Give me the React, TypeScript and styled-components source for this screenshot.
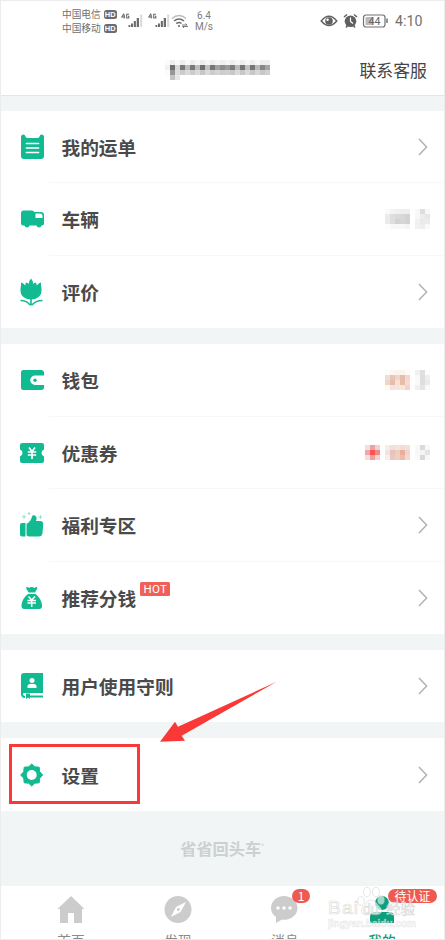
import React from "react";
import styled, { createGlobalStyle } from "styled-components";

const GREEN = "#12ba91";

const GlobalStyle = createGlobalStyle`
  body { margin: 0; background: #fff; }
  * { box-sizing: border-box; }
`;

const Screen = styled.div`
  position: relative;
  width: 445px;
  height: 940px;
  overflow: hidden;
  display: flex;
  flex-direction: column;
  border: 1px solid #ececec;
  background: #f1f5f6;
  color: #444;
  font-family: "Noto Sans CJK SC", sans-serif;
`;

const Header = styled.header`
  height: 95px;
  flex: none;
  background: #fff;
  border-bottom: 1px solid #e4e6e6;
`;

const StatusBar = styled.div`
  height: 40px;
  padding: 0 20px 0 61px;
  display: flex;
  align-items: center;
  color: #707070;
`;

const Carriers = styled.div`
  display: grid;
  row-gap: 0;
  width: 56px;
`;

const Carrier = styled.div`
  display: flex;
  align-items: center;
  gap: 3px;
  height: 14px;
  font-size: 9.7px;
  line-height: 14px;
  white-space: nowrap;
`;

const HdTag = styled.span`
  flex: none;
  width: 13px;
  height: 9px;
  border-radius: 2.5px;
  background: #6c6c6c;
  color: #fff;
  font: 700 7.5px/9px "Liberation Sans", sans-serif;
  text-align: center;
`;

const SignalSvg = styled.svg`
  width: 22px;
  height: 18px;
  margin-left: 3px;
  margin-right: 2px;
`;

const WifiSvg = styled.svg`
  width: 20px;
  height: 18px;
  margin-left: -2px;
`;

const Speed = styled.div`
  width: 24px;
  margin-left: 2px;
  text-align: center;
  font: 10px/11.5px Roboto, sans-serif;
  color: #7c7c7c;
`;

const StatusRight = styled.div`
  margin-left: auto;
  display: flex;
  align-items: center;
`;

const Clock = styled.span`
  margin-left: 6px;
  width: 29px;
  font: 14.2px/20px Roboto, sans-serif;
  white-space: nowrap;
`;

const TitleBar = styled.div`
  height: 54px;
  display: grid;
  grid-template-columns: 1fr auto;
  padding: 0 17px 0 164px;
`;

const TitleMosaic = styled.div`
  padding-top: 19px;
`;

const Support = styled.div`
  padding-top: 16px;
  font-size: 16.9px;
  line-height: 26px;
`;

const Mosaic = styled.div<{ $cols: number }>`
  display: grid;
  grid-template-columns: repeat(${(p) => p.$cols}, 5px);
  grid-auto-rows: 5px;
`;

const Cell = styled.i<{ $c: string }>`
  background: ${(p) => p.$c};
`;

const Group = styled.section<{ $h: number; $top: number }>`
  flex: none;
  height: ${(p) => p.$h}px;
  margin-top: ${(p) => p.$top}px;
  background: #fff;
  display: flex;
  flex-direction: column;
`;

const Row = styled.div`
  flex: 1 1 0;
  display: flex;
  align-items: center;
  padding: 0 14px 0 17px;
  background: linear-gradient(#f8f8f8, #f8f8f8) 48px 100% / 100% 1px no-repeat;
  &:last-child { background: none; }
`;

const IconSvg = styled.svg`
  width: 28px;
  height: 28px;
  flex: none;
`;

const Label = styled.div`
  margin-left: 15.5px;
  font-size: 18.7px;
  line-height: 28px;
  font-weight: 700;
  color: #4a4a4a;
  white-space: nowrap;
`;

const Hot = styled.div`
  width: 30px;
  height: 14px;
  margin: -17px 0 0 4px;
  border-radius: 1.5px;
  background: #ee6058;
  color: #fff;
  font: 11.5px/14px Roboto, sans-serif;
  letter-spacing: 0.3px;
  text-align: center;
`;

const Trail = styled.div`
  margin-left: auto;
  display: flex;
  align-items: center;
  gap: 5px;
`;

const ChevronSvg = styled.svg`
  width: 12px;
  height: 22px;
  margin-right: 1px;
`;

const Brand = styled.div`
  flex: none;
  height: 75px;
  padding-right: 1px;
  text-align: center;
  font-size: 16.2px;
  font-weight: 700;
  line-height: 75px;
  color: #ccd0d1;
  sup { font-size: 5px; line-height: 0; vertical-align: 7px; }
`;

const Nav = styled.nav`
  flex: none;
  height: 53px;
  overflow: hidden;
  background: #fff;
  display: grid;
  grid-template-columns: 124px 90px 124px 70px;
  padding-left: 8px;
`;

const Tab = styled.div<{ $active?: boolean }>`
  position: relative;
  display: flex;
  flex-direction: column;
  align-items: center;
  padding-top: 8px;
  font-size: 13.7px;
  line-height: 20px;
  font-weight: ${(p) => (p.$active ? 500 : 400)};
  color: ${(p) => (p.$active ? "#0b9c78" : "#8a8a8a")};
`;

const TabSvg = styled.svg`
  width: 30px;
  height: 30px;
  flex: none;
  margin-bottom: 6px;
`;

const Badge = styled.span<{ $x: number; $w: number }>`
  position: absolute;
  top: 3px;
  left: ${(p) => p.$x}px;
  width: ${(p) => p.$w}px;
  height: 14px;
  border-radius: 7px;
  background: #ee5a50;
  color: #fff;
  font-size: 12px;
  font-weight: 400;
  line-height: 13px;
  text-align: center;
`;

const Highlight = styled.div`
  position: absolute;
  left: 8px;
  top: 743px;
  width: 131px;
  height: 60px;
  border: 3px solid #fb3838;
`;

const ArrowSvg = styled.svg`
  position: absolute;
  left: 158px;
  top: 679px;
  width: 120px;
  height: 65px;
`;

const Watermark = styled.div`
  position: absolute;
  left: 326px;
  top: 883px;
  width: 96px;
  height: 45px;
`;

const MarkSvg = styled.svg`
  width: 96px;
  height: 45px;
  overflow: visible;
`;

const titleCells = [
  ["#fbfbfb", "#ededed", "#f8f8f8", "#eee", "#f8f8f8", "#ededed", "#f6f6f6", "#ededed", "#f6f6f6", "#eee", "#f6f6f6", "#f0f0f0", "#f6f6f6", "#eee", "#f6f6f6", "#ededed", "#f6f6f6", "#ededed", "#f6f6f6", "#eee", "#eee"],
  ["#f1f1f1", "#6e6e6e", "#d8d8d8", "#787878", "#bdbdbd", "#787878", "#bdbdbd", "#707070", "#c2c2c2", "#767676", "#a2a2a2", "#8c8c8c", "#9c9c9c", "#7c7c7c", "#bbb", "#747474", "#c0c0c0", "#747474", "#b8b8b8", "#868686", "#a4a4a4"],
  ["#fbfbfb", "#979797", "#dedede", "#ccc", "#dadada", "#ccc", "#dadada", "#c8c8c8", "#dadada", "#ccc", "#d4d4d4", "#ccc", "#d0d0d0", "#c8c8c8", "#dadada", "#c8c8c8", "#dadada", "#c8c8c8", "#d7d7d7", "#c8c8c8", "#d0d0d0"],
  ["#fff", "#c4c4c4", "#e7e7e7", ...Array(18).fill("#fff")],
];

const vehicleCells = [
  ["#fafafa", "#f4f4f4", "#f0f0f0", "#eee", "#eee", "#fff", "#f8f8f8", "#dedede", "#f7f7f7"],
  ["#ebebeb", "#dedede", "#dadada", "#d8d8d8", "#d2d2d2", "#fff", "#f8f8f8", "#ededed", "#e7e7e7"],
  ["#ebebeb", "#dedede", "#d3d3d3", "#d6d6d6", "#d2d2d2", "#fff", "#f1f1f1", "#eaeaea", "#ececec"],
  ["#fcfcfc", "#f8f8f8", "#f8f8f8", "#f8f8f8", "#f4f4f4", "#fff", "#f2f2f2", "#eee", "#fafafa"],
];

const walletCells = [
  ["#fefcfa", "#fcf6f2", "#fcf2ee", "#fcf2ee", "#fef8f6", "#fff", "#f1f1f1", "#e0e0e0", "#fcfcfc"],
  ["#f0ddd5", "#e9c5b6", "#f3d5c5", "#e7bda9", "#f3d7cd", "#fff", "#fafafa", "#dedede", "#eee"],
  ["#efd4c9", "#e5bdaf", "#fbe0cc", "#e5bea9", "#f7dbd1", "#fff", "#fafafa", "#dedede", "#eaeaea"],
  ["#fcf9ef", "#f5e1e2", "#f5e3e5", "#f9e4df", "#f1d4cc", "#fff", "#f0f0f0", "#e5e5e5", "#fafafa"],
];

const couponCells = [
  ["#f7dddd", "#e9a2a5", "#f3cfcd", "#fff", "#f3eeee", "#f3dfdc", "#f4e3da", "#f1dcd6", "#f3e2dc", "#fff", "#f8f8f8", "#dadada", "#f8f8f8"],
  ["#eca7b0", "#ff5148", "#e78c89", "#fff", "#f1e4e4", "#eac2bd", "#f0cdbc", "#ebae9e", "#f4d3c8", "#fff", "#f8f8f8", "#f4f4f4", "#e4e4e4"],
  ["#f6dcdc", "#e8a0a2", "#f5cfcf", "#fff", "#f4eeee", "#edc6c3", "#eed0bf", "#eabcae", "#f3dace", "#fff", "#fafafa", "#d9d9d9", "#f7f7f7"],
];

function Pixels({ rows }: { rows: string[][] }) {
  return (
    <Mosaic $cols={rows[0].length}>
      {rows.flat().map((c, i) => (
        <Cell key={i} $c={c} />
      ))}
    </Mosaic>
  );
}

function Signal() {
  return (
    <SignalSvg viewBox="0 0 22 18" fill="#6c6c6c">
      <path d="M3 1.500L0.800 5H4.200M3.200 2.500V6.500M8 2.200H5.700V6H7.800V4.300H7" stroke="#6c6c6c" strokeWidth="1.100" fill="none" />
      <rect x="7.500" y="13" width="1.800" height="2" />
      <rect x="10" y="11.500" width="2" height="3.500" />
      <rect x="12.800" y="9" width="2.100" height="6" />
      <rect x="15.700" y="6" width="2.300" height="9" />
      <rect x="19.200" y="2.500" width="2" height="12.500" opacity="0.25" />
    </SignalSvg>
  );
}

function Chevron() {
  return (
    <ChevronSvg viewBox="0 0 12 22" fill="none" stroke="#b2b2b2" strokeWidth="1.500">
      <path d="M2 3L9.600 11L2 19" />
    </ChevronSvg>
  );
}

const icons: Record<string, React.ReactNode> = {
  waybill: (
    <>
      <path d="M5.500 1.500Q3 1.500 3 4V23Q3 26 6 26H23Q26 26 26 23V4Q26 1.500 23.500 1.500Q22 1.500 21.500 3.500Q21 5 19.500 5H9.500Q8 5 7.500 3.500Q7 1.500 5.500 1.500Z" />
      <path d="M8.500 10.500H20.500M8.500 15H20.500M8.500 19.500H20.500" stroke="#fff" strokeWidth="1.700" strokeLinecap="round" />
    </>
  ),
  truck: (
    <>
      <path d="M5.500 5.500H14Q16 5.500 16 7H23Q26 7 26 10V18.500Q26 20.500 24 20.500H23.500A2.600 2.600 0 0 1 18.500 20.500H11.500A2.600 2.600 0 0 1 6.500 20.500H5Q3 20.500 3 18.500V8Q3 5.500 5.500 5.500Z" />
      <path d="M17.500 8.500H22Q24.500 8.500 24.500 11V13H17.500Z" fill="#fff" />
    </>
  ),
  tulip: (
    <>
      <path d="M3 4.500Q5.500 5 7.200 7.500Q7.500 5 8.300 4.500Q9.800 4.500 10.700 6Q11 2.500 13 .5Q15 2.500 15.300 6Q16.200 4.500 17.700 4.500Q18.500 5 18.800 7.500Q20.500 5 23 4.500Q22.700 7 23.500 10.500Q24 16.500 20.500 19Q17.500 21.500 13 21.500Q8.500 21.500 5.500 19Q2 16.500 2.500 10.500Q3.300 7 3 4.500Z" />
      <path d="M13 20V27.500M12 27Q9 22.500 2.500 22.500M14 27Q17.500 22.500 24.500 22.500" fill="none" stroke={GREEN} strokeWidth="1.600" />
    </>
  ),
  wallet: (
    <>
      <path d="M5.500 4H23Q26 4 26 6.500V9.500H17A4.700 4.700 0 0 0 17 19H26V21.500Q26 24 23 24H5.500Q3 24 3 21.500V6.500Q3 4 5.500 4Z" />
      <circle cx="17" cy="14.200" r="1.700" />
    </>
  ),
  coupon: (
    <>
      <path d="M4.500 4H24Q26 4 26 6V10.500A3.700 3.700 0 0 0 26 17.500V22Q26 24 24 24H4Q2 24 2 22V17.500A3.700 3.700 0 0 0 2 10.500V6Q2 4 4.500 4Z" />
      <path d="M11 8.500L14 12.500L17 8.500M9.800 13H18.200M9.800 16H18.200M14 12.500V20" fill="none" stroke="#fff" strokeWidth="1.700" />
    </>
  ),
  thumb: (
    <>
      <path d="M4 12H7.500V25.500H4Q2 25.500 2 23.500V14Q2 12 4 12ZM8.500 13Q13 10 14 5.500Q15 3.500 17 4.500Q19.500 6 18 10H22Q25.500 10 25.200 13.500L24.500 22Q24 25.500 20.500 25.500H11Q8.500 25.500 8.500 23Z" />
      <path d="M6 3.500V8M4 5.700H8M11 1V4M9.500 2.500H12.500M22.500 4V8M20.500 6H24.500" stroke={GREEN} strokeWidth=".8" opacity=".5" />
    </>
  ),
  bag: (
    <>
      <path d="M8 4Q9 2 11 4Q13.700 2 16.500 4Q18.500 2 19.500 4L17 8.500H10.500ZM10 10H17.500Q23 14 24 21Q24.500 25 21 25H6.500Q3 25 3.500 21Q4.500 14 10 10Z" />
      <path d="M10.500 12.500L13.700 16L17 12.500M9.500 16.500H18M9.500 19H18M13.700 16V23" fill="none" stroke="#fff" strokeWidth="1.500" />
    </>
  ),
  book: (
    <>
      <path d="M6 1H25V21H6Q5 21 5 22Q5 24 7 24V26Q3 26 3 22V4Q3 1 6 1ZM12 23.500H25V25.500H12Z" />
      <path d="M8 21.500H12V27L10 25.500L8 27Z" />
      <circle cx="14" cy="8.500" r="2.500" fill="#fff" />
      <path d="M9.500 16V14.500Q9.500 12 12 12H16Q18.500 12 18.500 14.500V16Z" fill="#fff" />
    </>
  ),
  gear: (
    <>
      <path
        d="M13.700 3L16.700 5.800L21.200 6.200L21.700 10.800L24.700 14L21.700 17.200L21.200 21.800L16.700 22.200L13.700 25L10.700 22.200L6.200 21.800L5.700 17.200L2.700 14L5.700 10.800L6.200 6.200L10.700 5.800Z"
        stroke={GREEN}
        strokeLinejoin="round"
      />
      <circle cx="13.700" cy="14" r="5" fill="#fff" />
    </>
  ),
};

type Item = { icon: string; label: string; hot?: boolean; cells?: string[][] };

const groups: { h: number; top: number; items: Item[] }[] = [
  {
    h: 217,
    top: 15,
    items: [
      { icon: "waybill", label: "我的运单" },
      { icon: "truck", label: "车辆", cells: vehicleCells },
      { icon: "tulip", label: "评价" },
    ],
  },
  {
    h: 290,
    top: 16,
    items: [
      { icon: "wallet", label: "钱包", cells: walletCells },
      { icon: "coupon", label: "优惠券", cells: couponCells },
      { icon: "thumb", label: "福利专区" },
      { icon: "bag", label: "推荐分钱", hot: true },
    ],
  },
  { h: 72, top: 16, items: [{ icon: "book", label: "用户使用守则" }] },
  { h: 73, top: 16, items: [{ icon: "gear", label: "设置" }] },
];

export default function App() {
  return (
    <>
      <GlobalStyle />
      <Screen>
        <Header>
          <StatusBar>
            <Carriers>
              <Carrier>中国电信<HdTag>HD</HdTag></Carrier>
              <Carrier>中国移动<HdTag>HD</HdTag></Carrier>
            </Carriers>
            <Signal />
            <Signal />
            <WifiSvg viewBox="0 0 20 18" fill="none" stroke="#6c6c6c" strokeWidth="1.600">
              <path d="M2 6.500Q9 .5 16 6.500" opacity=".45" />
              <path d="M4 9Q9 5 14 9M6.300 11.700Q9 9.500 11.500 11.500" />
              <circle cx="9" cy="14" r="1" fill="#666" stroke="none" />
              <path d="M12 13H17L15.500 11.500M18 14.500H12.500L14 16" strokeWidth=".9" />
            </WifiSvg>
            <Speed>6.4<br />M/s</Speed>
            <StatusRight>
              <svg width="18" height="16" viewBox="0 0 18 16">
                <path d="M1.200 8Q9-1.500 16.800 8Q9 17 1.200 8Z" fill="none" stroke="#606060" strokeWidth="1.400" />
                <circle cx="9" cy="8" r="3.800" fill="#606060" />
                <circle cx="7.600" cy="6.700" r="1.200" fill="#fff" />
              </svg>
              <svg width="21" height="16" viewBox="0 0 20 16">
                <circle cx="12" cy="8.300" r="5.800" fill="#606060" />
                <path d="M5.500 4L8.500 1.500M18.500 4L15.500 1.500M7.500 14.500L9 12.500M16.500 14.500L15 12.500" stroke="#606060" strokeWidth="1.500" />
                <path d="M12 4.500V8.500L14.500 10.500" fill="none" stroke="#fff" strokeWidth="1.200" />
              </svg>
              <svg width="30" height="16" viewBox="0 0 30 16">
                <rect x="4.500" y="2" width="21.500" height="12" rx="2.500" fill="#fff" stroke="#707070" strokeWidth="1.200" />
                <rect x="6.500" y="4" width="8" height="8" fill="#bbb" />
                <path d="M28 5.500V10" stroke="#707070" strokeWidth="1.500" />
                <text x="15.500" y="12" textAnchor="middle" fontFamily="Roboto, sans-serif" fontSize="10.500" fill="#666">44</text>
              </svg>
              <Clock>4:10</Clock>
            </StatusRight>
          </StatusBar>
          <TitleBar>
            <TitleMosaic><Pixels rows={titleCells} /></TitleMosaic>
            <Support>联系客服</Support>
          </TitleBar>
        </Header>

        {groups.map((g) => (
          <Group key={g.items[0].label} $h={g.h} $top={g.top}>
            {g.items.map((it) => (
              <Row key={it.label}>
                <IconSvg viewBox="0 0 28 28" fill={GREEN}>{icons[it.icon]}</IconSvg>
                <Label>{it.label}</Label>
                {it.hot && <Hot>HOT</Hot>}
                <Trail>{it.cells ? <Pixels rows={it.cells} /> : <Chevron />}</Trail>
              </Row>
            ))}
          </Group>
        ))}

        <Brand>省省回头车<sup>®</sup></Brand>

        <Nav>
          <Tab>
            <TabSvg viewBox="0 0 30 30" fill="#ccc">
              <path d="M15 2L28.500 15H26V29H18V19H12V29H4V15H1.500Z" />
            </TabSvg>
            首页
          </Tab>
          <Tab>
            <TabSvg viewBox="0 0 30 30" fill="#ccc">
              <circle cx="15" cy="15.500" r="13.500" />
              <path d="M23 8L17.500 18L8 23L13 13Z" fill="#fff" />
              <circle cx="15.300" cy="15.500" r="1.500" />
            </TabSvg>
            发现
          </Tab>
          <Tab>
            <TabSvg viewBox="0 0 30 30" fill="#ccc">
              <path d="M14 2C7 2 1 7 1 14C1 18 3 21 6 23V29L12 25.500C20 27 27.500 21.500 27.500 14C27.500 7 21 2 14 2Z" />
              <g fill="#fff"><circle cx="8" cy="14" r="1.700" /><circle cx="14" cy="14" r="1.700" /><circle cx="20" cy="14" r="1.700" /></g>
            </TabSvg>
            消息
            <Badge $x={69} $w={18}>1</Badge>
          </Tab>
          <Tab $active>
            <TabSvg viewBox="0 0 30 30" fill="#0b9f7b">
              <circle cx="15" cy="9" r="7" />
              <path d="M3 29V23Q3 18 8 18H22Q27 18 27 23V29Z" />
            </TabSvg>
            我的
            <Badge $x={41} $w={49}>待认证</Badge>
          </Tab>
        </Nav>

        <Highlight />
        <ArrowSvg viewBox="0 0 120 65">
          <path d="M117.700 1.700L22.700 55.700L26 60.700L1 61.700L16 41.700L19 46.700Z" fill="#fb3838" />
        </ArrowSvg>
        <Watermark>
          <MarkSvg viewBox="0 0 96 45" fill="#fff" fillOpacity=".6" stroke="#ccc" strokeOpacity=".7" strokeWidth=".7">
            <g>
              <ellipse cx="34" cy="17" rx="3.300" ry="4.300" />
              <ellipse cx="40" cy="8" rx="3.500" ry="4.800" />
              <ellipse cx="49" cy="8" rx="3.500" ry="4.800" />
              <ellipse cx="54" cy="16" rx="3.300" ry="4.300" />
              <path d="M44 16Q40 16 38 21Q33 25 35 29Q38 32 44 30Q51 32 54 29Q56 25 51 21Q48 16 44 16Z" />
            </g>
            <g fontFamily="Liberation Sans, sans-serif" fontWeight="700">
              <text x="1" y="30" fontSize="19" textLength="30" fontWeight="400">Bai</text>
              <text x="36" y="29.500" fontSize="14" fontWeight="400">du</text>
              <text x="59" y="29.500" fontSize="14.500" fontWeight="400" fontFamily="Noto Sans CJK SC, sans-serif">经验</text>
              <text x="1" y="43" fontSize="10.500" textLength="88" lengthAdjust="spacingAndGlyphs" strokeOpacity=".45">jingyan.baidu.com</text>
            </g>
          </MarkSvg>
        </Watermark>
      </Screen>
    </>
  );
}
